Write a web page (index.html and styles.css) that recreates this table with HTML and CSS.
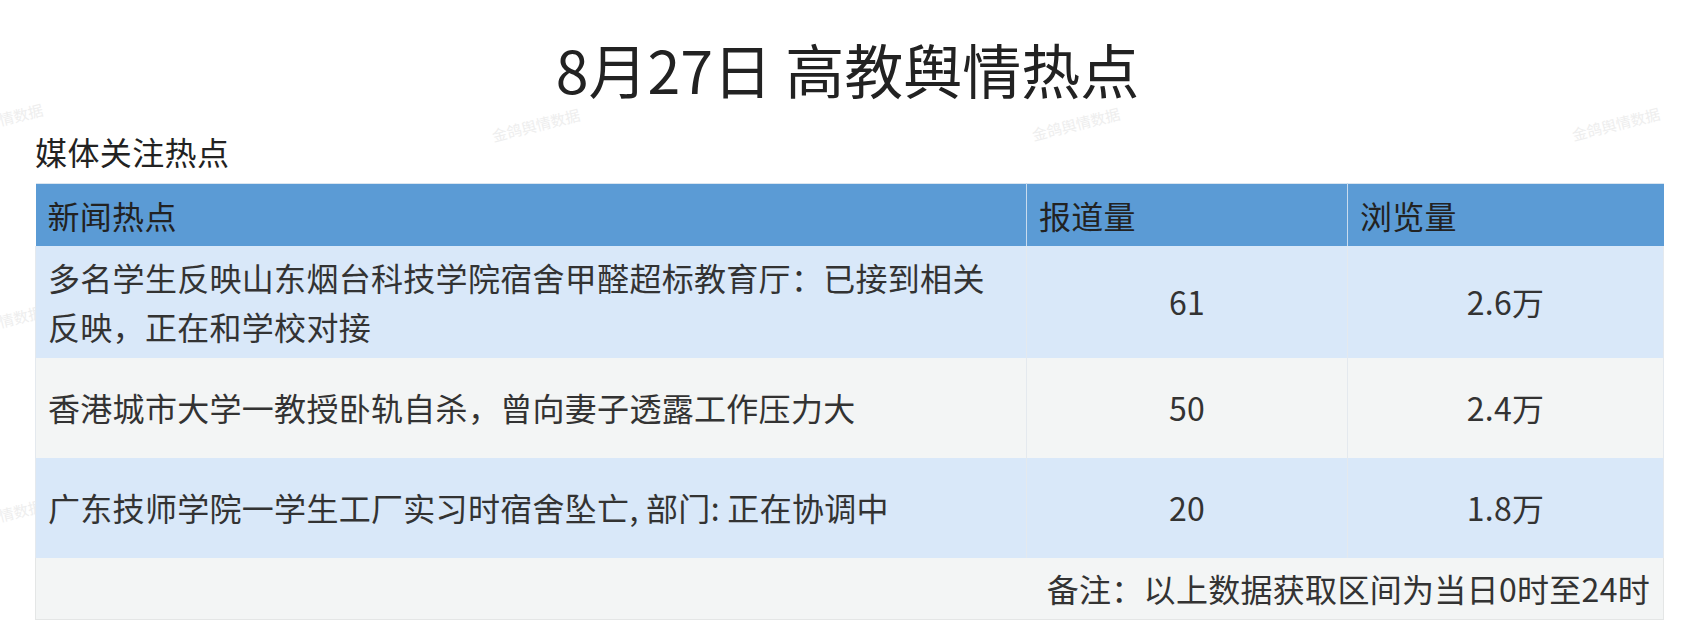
FILE: index.html
```html
<!DOCTYPE html>
<html lang="zh-CN">
<head>
<meta charset="utf-8">
<title>8月27日 高教舆情热点</title>
<link rel="stylesheet" href="styles.css">
</head>
<body>
<div class="watermarks" aria-hidden="true">
  <span class="wm wm-a">金鸽舆情数据</span>
  <span class="wm wm-b">金鸽舆情数据</span>
  <span class="wm wm-c">金鸽舆情数据</span>
  <span class="wm wm-d">金鸽舆情数据</span>
  <span class="wm wm-e">金鸽舆情数据</span>
  <span class="wm wm-f">金鸽舆情数据</span>
</div>
<main class="page">
  <h1 class="title">8月27日 高教舆情热点</h1>
  <div class="subtitle">媒体关注热点</div>
  <table class="hot-table">
    <colgroup>
      <col class="c-news">
      <col class="c-count">
      <col class="c-views">
    </colgroup>
    <thead>
      <tr class="head-row">
        <th>新闻热点</th>
        <th>报道量</th>
        <th>浏览量</th>
      </tr>
    </thead>
    <tbody>
      <tr class="row row-blue row-tall">
        <td class="news">多名学生反映山东烟台科技学院宿舍甲醛超标教育厅：已接到相关反映，正在和学校对接</td>
        <td class="num">61</td>
        <td class="num">2.6万</td>
      </tr>
      <tr class="row row-gray">
        <td class="news">香港城市大学一教授卧轨自杀，曾向妻子透露工作压力大</td>
        <td class="num">50</td>
        <td class="num">2.4万</td>
      </tr>
      <tr class="row row-blue">
        <td class="news">广东技师学院一学生工厂实习时宿舍坠亡, 部门: 正在协调中</td>
        <td class="num">20</td>
        <td class="num">1.8万</td>
      </tr>
      <tr class="foot-row">
        <td colspan="3" class="note">备注：以上数据获取区间为当日0时至24时</td>
      </tr>
    </tbody>
  </table>
</main>
</body>
</html>
```

FILE: styles.css
```css
html, body {
  margin: 0;
  padding: 0;
  background: #ffffff;
}

body {
  position: relative;
  width: 1695px;
  height: 642px;
  overflow: hidden;
  font-family: "Noto Sans CJK SC", "Noto Sans", sans-serif;
  color: #333333;
}

.watermarks {
  position: absolute;
  inset: 0;
  z-index: 0;
}

.wm {
  position: absolute;
  width: 92px;
  height: 20px;
  line-height: 20px;
  font-size: 15px;
  color: #eeeeee;
  white-space: nowrap;
  transform: rotate(-14deg);
}

.wm-a { left: 491px; top: 115px; }
.wm-b { left: 1031px; top: 114px; }
.wm-c { left: 1571px; top: 114px; }
.wm-d { left: -46px; top: 110px; }
.wm-e { left: -46px; top: 312px; }
.wm-f { left: -46px; top: 506px; }

.page {
  position: relative;
  z-index: 1;
  padding: 0 0 0 35px;
}

.title {
  margin: 0 0 0 -35px;
  padding-top: 34px;
  height: 70px;
  line-height: 70px;
  font-size: 59px;
  font-weight: 400;
  text-align: center;
  color: #222222;
}

.subtitle {
  margin-top: 15px;
  height: 64px;
  line-height: 64px;
  font-size: 32px;
  letter-spacing: 0.4px;
  color: #222222;
}

.hot-table {
  width: 1628px;
  border-collapse: collapse;
  table-layout: fixed;
  font-size: 32px;
  letter-spacing: 0.3px;
}

.c-news { width: 991px; }
.c-count { width: 321px; }
.c-views { width: 316px; }

.head-row {
  height: 62px;
  background: #5b9bd5;
}

.head-row th {
  padding: 0 12px;
  text-align: left;
  font-weight: 400;
  color: #222222;
  border-top: 1px solid #d9e5f0;
  border-right: 1px solid #c9dcee;
  line-height: 40px;
}

.head-row th:last-child {
  border-right: none;
}

.row td {
  padding: 0 12px;
  line-height: 49px;
  border-right: 1px solid #e4e9ee;
}

.row td:first-child {
  border-left: 1px solid #e4e9ee;
}

.row {
  height: 100px;
}

.row-tall {
  height: 112px;
}

.row-blue {
  background: #d9e8f9;
}

.row-gray {
  background: #f3f5f5;
}

.row td.news {
  text-align: left;
  padding-right: 30px;
}

.num {
  text-align: center;
}

.foot-row {
  height: 62px;
  background: #f3f5f5;
}

.note {
  text-align: right;
  padding: 0 13px 0 12px;
  line-height: 40px;
  border: 1px solid #e4e6e6;
  border-top: none;
}
```
